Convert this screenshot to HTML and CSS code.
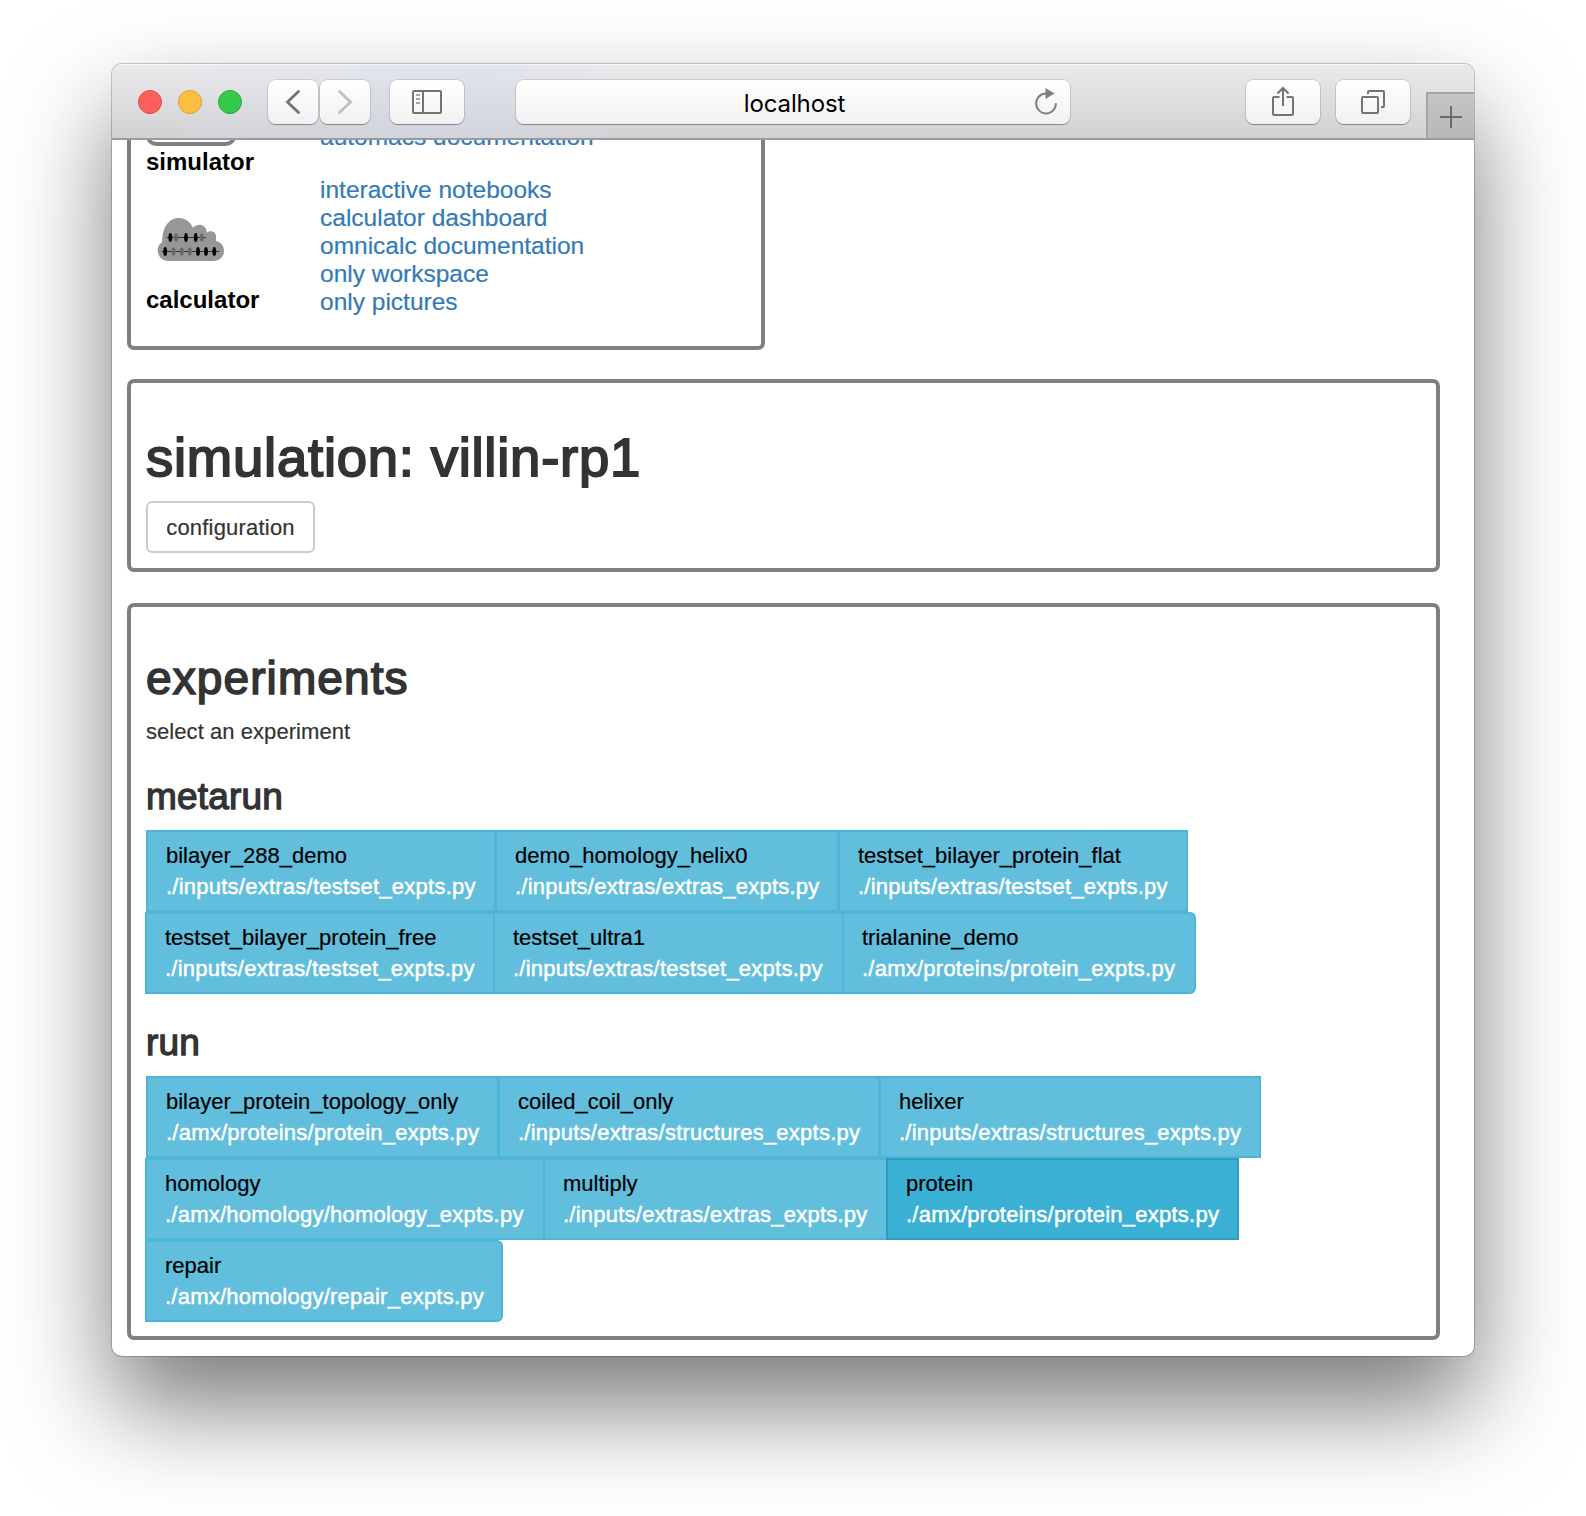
FILE: index.html
```html
<!DOCTYPE html>
<html lang="en">
<head>
<meta charset="utf-8">
<title>localhost</title>
<link rel="stylesheet" href="styles.css">
</head>
<body>
<div class="window">
  <header class="toolbar">
    <div class="lights">
      <span class="light light-close"></span>
      <span class="light light-min"></span>
      <span class="light light-max"></span>
    </div>
    <div class="nav">
      <button class="tool tool-nav" aria-label="Back">
        <svg width="50" height="44" viewBox="0 0 50 44"><path d="M30.5 11.5 L19.5 22 L30.5 32.5" fill="none" stroke="#737373" stroke-width="2.8" stroke-linecap="round"/></svg>
      </button>
      <button class="tool tool-nav" aria-label="Forward">
        <svg width="50" height="44" viewBox="0 0 50 44"><path d="M19.5 11.5 L30.5 22 L19.5 32.5" fill="none" stroke="#c0c0c0" stroke-width="2.8" stroke-linecap="round"/></svg>
      </button>
    </div>
    <button class="tool tool-side" aria-label="Sidebar">
      <svg width="74" height="44" viewBox="0 0 74 44"><g fill="none" stroke="#737373" stroke-width="2"><rect x="23" y="11" width="28" height="22" rx="1"/><path d="M33 11V33"/><path d="M26 15H30M26 19H30M26 23H30" stroke="#8c8c8c" stroke-width="1.6"/></g></svg>
    </button>
    <div class="address">
      <span class="address-text">localhost</span>
      <svg class="reload" width="26" height="30" viewBox="0 0 26 30"><path d="M13 7.6 A9.9 9.9 0 1 0 22.9 17.2" fill="none" stroke="#808080" stroke-width="2"/><path d="M12.5 2 L21.5 7.6 L12.5 13 Z" fill="#808080"/></svg>
    </div>
    <button class="tool tool-share" aria-label="Share">
      <svg width="74" height="44" viewBox="0 0 74 44"><g fill="none" stroke="#737373" stroke-width="2"><path d="M33.5 17H28Q27 17 27 18V34Q27 35 28 35H46Q47 35 47 34V18Q47 17 46 17H40.5"/><path d="M37 26V8"/><path d="M31.5 13.5 L37 8 L42.5 13.5"/></g></svg>
    </button>
    <button class="tool tool-tabs" aria-label="Tabs">
      <svg width="74" height="44" viewBox="0 0 74 44"><g fill="none" stroke="#737373" stroke-width="2"><rect x="26" y="17" width="16" height="16" rx="1"/><path d="M32 14V12Q32 11 33 11H47Q48 11 48 12V26Q48 27 47 27H45"/></g></svg>
    </button>
    <button class="new-tab" aria-label="New tab">
      <svg width="46" height="44" viewBox="0 0 46 44"><path d="M23 12V34M12 23H34" stroke="#6a6a6a" stroke-width="2"/></svg>
    </button>
  </header>

  <main class="page">
    <section class="card card-menu">
      <div class="menu-item menu-simulator">
        <div class="thumb"></div>
        <div class="menu-name">simulator</div>
      </div>
      <div class="links links-simulator"><a>automacs documentation</a></div>
      <div class="menu-item menu-calculator">
        <svg class="cloud" width="68" height="44" viewBox="0 0 68 44">
          <path fill="#979797" d="M10.500 43 A10.500 10.500 0 0 1 5.200 24 C5.200 9 12 0 21.500 0 C28.500 0 33.500 4 36 9.800 C41 4.500 49 6.500 50 14.500 C53.500 11.500 59 14 59 18 V23 C64 24 67 28 67 33 A10 10 0 0 1 57 43 Z"/>
          <path d="M9.700 19.500H49M5 33.500H62" stroke="#333" stroke-width="1"/>
          <g fill="#6a6a6a"><ellipse cx="19" cy="19.500" rx="2" ry="4"/><ellipse cx="44.800" cy="19.500" rx="2" ry="4"/><ellipse cx="16.500" cy="33.500" rx="2" ry="4"/><ellipse cx="24.700" cy="33.500" rx="2" ry="4"/><ellipse cx="32.700" cy="33.500" rx="2" ry="4"/></g>
          <g fill="#000"><ellipse cx="13.300" cy="19.500" rx="1.900" ry="4.500"/><ellipse cx="29" cy="19.500" rx="1.900" ry="4.500"/><ellipse cx="38.700" cy="19.500" rx="1.900" ry="4.500"/><ellipse cx="8.200" cy="33.500" rx="1.900" ry="4.500"/><ellipse cx="41" cy="33.500" rx="1.900" ry="4.500"/><ellipse cx="49" cy="33.500" rx="1.900" ry="4.500"/><ellipse cx="57.300" cy="33.500" rx="1.900" ry="4.500"/></g>
        </svg>
        <div class="menu-name">calculator</div>
      </div>
      <div class="links">
        <a>interactive notebooks</a>
        <a>calculator dashboard</a>
        <a>omnicalc documentation</a>
        <a>only workspace</a>
        <a>only pictures</a>
      </div>
    </section>

    <section class="card card-simulation">
      <h1>simulation: villin-rp1</h1>
      <button class="btn">configuration</button>
    </section>

    <section class="card card-experiments">
      <h2>experiments</h2>
      <p>select an experiment</p>

      <h3>metarun</h3>
      <div class="tiles">
        <div class="row row-first row-m1">
          <div class="tile"><b>bilayer_288_demo</b><span>./inputs/extras/testset_expts.py</span></div>
          <div class="tile"><b>demo_homology_helix0</b><span>./inputs/extras/extras_expts.py</span></div>
          <div class="tile"><b>testset_bilayer_protein_flat</b><span>./inputs/extras/testset_expts.py</span></div>
        </div>
        <div class="row row-m2">
          <div class="tile"><b>testset_bilayer_protein_free</b><span>./inputs/extras/testset_expts.py</span></div>
          <div class="tile"><b>testset_ultra1</b><span>./inputs/extras/testset_expts.py</span></div>
          <div class="tile tile-last"><b>trialanine_demo</b><span>./amx/proteins/protein_expts.py</span></div>
        </div>
      </div>

      <h3>run</h3>
      <div class="tiles">
        <div class="row row-first row-r1">
          <div class="tile"><b>bilayer_protein_topology_only</b><span>./amx/proteins/protein_expts.py</span></div>
          <div class="tile"><b>coiled_coil_only</b><span>./inputs/extras/structures_expts.py</span></div>
          <div class="tile"><b>helixer</b><span>./inputs/extras/structures_expts.py</span></div>
        </div>
        <div class="row row-r2">
          <div class="tile"><b>homology</b><span>./amx/homology/homology_expts.py</span></div>
          <div class="tile"><b>multiply</b><span>./inputs/extras/extras_expts.py</span></div>
          <div class="tile tile-active"><b>protein</b><span>./amx/proteins/protein_expts.py</span></div>
        </div>
        <div class="row row-r3">
          <div class="tile tile-last"><b>repair</b><span>./amx/homology/repair_expts.py</span></div>
        </div>
      </div>
    </section>
  </main>
</div>
</body>
</html>
```

FILE: styles.css
```css
* { box-sizing: border-box; }

body {
  margin: 0;
  height: 1516px;
  padding: 64px 0 0 112px;
  background: #fff;
  font-family: "Liberation Sans", Arial, sans-serif;
  font-size: 22px;
  line-height: 31px;
  color: #333;
  overflow: hidden;
}

button { font: inherit; color: inherit; padding: 0; margin: 0; }
svg { display: block; }
h1, h2, h3, p { margin: 0; }
h1, h2, h3 { font-weight: 400; -webkit-text-stroke: 0.035em #333; }
p, .btn { -webkit-text-stroke: .2px #333; }
p { letter-spacing: .06px; }

.window {
  width: 1362px;
  height: 1292px;
  border-radius: 10px;
  overflow: hidden;
  background: #fff;
  display: flex;
  flex-direction: column;
  box-shadow: 0 0 0 1px rgba(0, 0, 0, .2), 0 50px 100px rgba(0, 0, 0, .53);
}

/* browser toolbar */
.toolbar {
  flex: none;
  height: 76px;
  padding-top: 2px;
  display: flex;
  align-items: center;
  border-bottom: 2px solid #9c9a9e;
  box-shadow: inset 0 1px 0 #f5f4f6;
  background:
    linear-gradient(90deg, transparent 60px, rgba(205, 220, 242, .33) 330px, rgba(205, 220, 242, .33) 370px, transparent 500px),
    linear-gradient(#ebe9ec, #d3d1d4);
}
.lights { display: flex; gap: 16px; margin-left: 26px; }
.light { width: 24px; height: 24px; border-radius: 50%; border: 1px solid; }
.light-close { background: #fe5f5b; border-color: #e04a46; }
.light-min { background: #fdbd40; border-color: #e0a033; }
.light-max { background: #33c949; border-color: #24ab36; }
.nav { display: flex; gap: 2px; margin-left: 26px; }
.tool, .address {
  height: 44px;
  border: 0;
  border-radius: 8px;
  background: linear-gradient(#fff, #f1f1f1);
  box-shadow: 0 0 0 1px rgba(0, 0, 0, .1), 0 1px 1px rgba(0, 0, 0, .32);
}
.tool { width: 74px; }
.tool-nav { width: 50px; }
.tool-side { margin-left: 20px; }
.address {
  width: 554px;
  margin-left: 52px;
  display: flex;
  align-items: center;
  padding: 0 11px 0 37px;
}
.address-text {
  flex: 1;
  padding: 2px 0 0 3px;
  text-align: center;
  font-family: Inter, sans-serif;
  font-size: 24px;
  letter-spacing: -.1px;
  color: #000;
}
.reload { margin-top: -2px; }
.tool-share { margin-left: 176px; }
.tool-tabs { margin-left: 16px; }
.new-tab {
  width: 48px;
  height: 46px;
  margin-left: 16px;
  align-self: flex-end;
  border: solid #a6a4a7;
  border-width: 2px 0 0 2px;
  background: linear-gradient(#c6c4c7, #b9b7ba);
}

/* page */
.page { flex: 1; min-height: 0; overflow: hidden; padding-left: 15px; }
.card { width: 1313px; border: 4px solid #808080; border-radius: 7px; }

.card-menu {
  width: 638px;
  height: 250px;
  margin-top: -40px;
  padding-left: 15px;
  display: grid;
  grid-template-columns: 174px 1fr;
  grid-template-rows: 72px 170px;
}
.thumb {
  width: 90px;
  height: 42px;
  border: 4px solid #808080;
  border-top: 0;
  border-radius: 0 0 10px 10px;
}
.menu-name {
  font-size: 24px;
  line-height: 28px;
  font-weight: 700;
  color: #000;
}
.menu-simulator .menu-name { margin-top: 2px; }
.cloud { margin: 42px 0 0 11px; }
.menu-calculator .menu-name { margin-top: 24px; }
.links {
  display: flex;
  flex-direction: column;
  font-size: 24.5px;
  line-height: 28px;
  color: #337ab7;
  -webkit-text-stroke: .2px #337ab7;
}
.links-simulator { padding-top: 19px; }

.card-simulation { height: 193px; margin-top: 29px; padding: 44px 0 0 15px; }
h1 { font-size: 54.5px; line-height: 61px; letter-spacing: .75px; }
.btn {
  display: block;
  width: 169px;
  height: 52px;
  margin-top: 13px;
  border: 2px solid #ccc;
  border-radius: 6px;
  background: #fff;
  letter-spacing: .2px;
}

.card-experiments { height: 737px; margin-top: 31px; padding: 46px 0 0 15px; }
h2 { font-size: 46px; line-height: 51px; letter-spacing: 1.1px; margin-bottom: 12px; }
h3 { font-size: 37px; line-height: 41px; letter-spacing: .2px; margin: 29px 0 13px; }
.tiles + h3 { margin-top: 28px; }

.row { display: grid; margin-left: -1px; height: 82px; }
.row-first { margin-left: 0; }
.row-m1 { grid-template-columns: 349px 343px 350px; }
.row-m2 { grid-template-columns: 348px 349px 354px; }
.row-r1 { grid-template-columns: 352px 381px 382px; }
.row-r2 { grid-template-columns: 398px 343px 353px; }
.row-r3 { grid-template-columns: 358px; }
.tile {
  display: flex;
  flex-direction: column;
  margin-right: -2px;
  padding: 8px 0 0 18px;
  border: 2px solid #4cb6d8;
  background: #61bedc;
  color: #fff;
  white-space: nowrap;
}
.row-first .tile { margin-right: -1px; }
.row .tile:last-child { margin-right: 0; }
.tile b { font-weight: 400; color: #000; -webkit-text-stroke: .2px #000; }
.tile span { letter-spacing: .24px; -webkit-text-stroke: .5px #fff; }
.tile-last { border-radius: 0 6px 6px 0; }
.tile-active { background: #3ab0d4; border-color: #2f9bbc; }
```
